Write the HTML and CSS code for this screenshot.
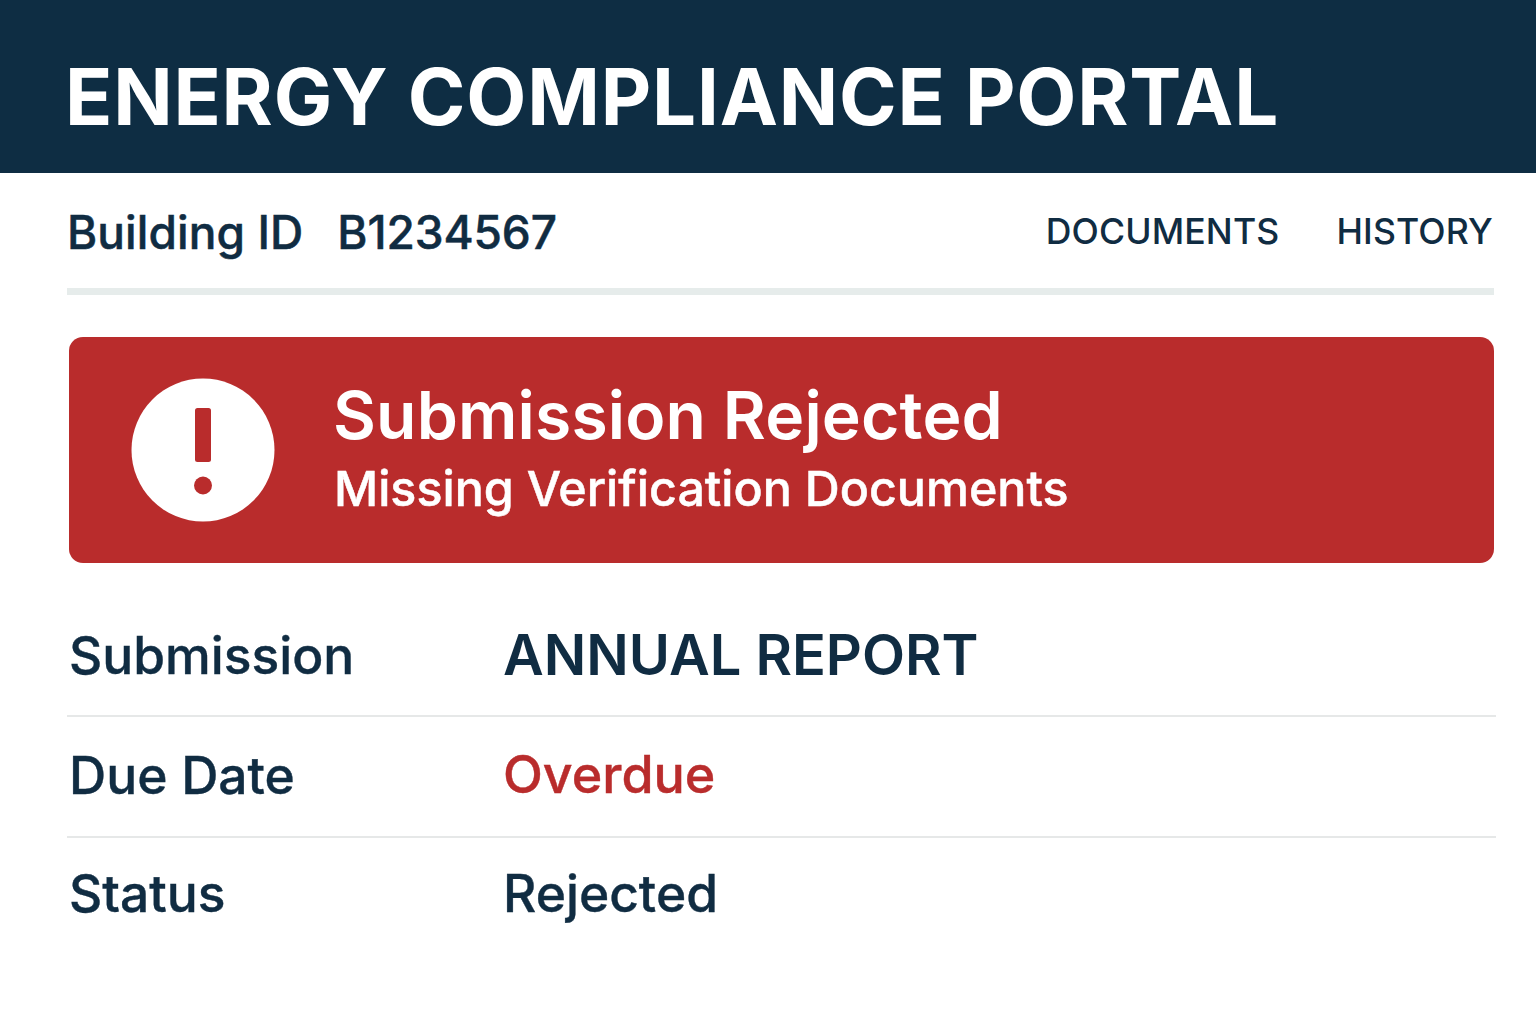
FILE: index.html
```html
<!DOCTYPE html>
<html lang="en">
<head>
<meta charset="utf-8">
<title>Energy Compliance Portal</title>
<link rel="stylesheet" href="styles.css">
</head>
<body>
<header class="top"><h1>ENERGY COMPLIANCE PORTAL</h1></header>
<main class="wrap">
<div class="bar">
<div class="id"><span class="id-label">Building ID</span><span>B1234567</span></div>
<nav class="nav"><a>DOCUMENTS</a><a>HISTORY</a></nav>
</div>
<section class="alert">
<svg class="icon" viewBox="0 0 144 144" width="144" height="144"><circle cx="72" cy="72" r="71.5" fill="#fff"/><rect x="64" y="30" width="16" height="54" rx="2.5" fill="#b92c2c"/><circle cx="72" cy="107.500" r="9" fill="#b92c2c"/></svg>
<div class="msg"><div class="t1">Submission Rejected</div><div class="t2">Missing Verification Documents</div></div>
</section>
<div class="rows">
<div class="row"><span class="k">Submission</span><span class="v big">ANNUAL REPORT</span></div>
<div class="row mid"><span class="k">Due Date</span><span class="v red">Overdue</span></div>
<div class="row last"><span class="k">Status</span><span class="v">Rejected</span></div>
</div>
</main>
</body>
</html>
```
FILE: styles.css
```css
*{box-sizing:border-box}
html,body{margin:0;padding:0;background:#fff}
body{font-family:Inter,"Liberation Sans",sans-serif;color:#102c42;height:1024px;overflow:hidden}
.top{height:173px;background:#0e2d43;display:flex;align-items:center;padding:20px 0 0 65px}
.top h1{margin:0;color:#fff;font-size:78px;font-weight:700;line-height:1;letter-spacing:.8px}
.wrap{padding:0 40px 0 67px}
.bar{height:122px;margin-right:2px;border-bottom:7px solid #e6eceb;display:flex;justify-content:space-between;align-items:center;padding-top:3px}
.id{display:flex;gap:34px;font-size:46px;font-weight:500;letter-spacing:-.1px;-webkit-text-stroke:.5px currentColor}
.id-label{letter-spacing:.1px}
.nav{display:flex;gap:57px;font-size:35.600px;font-weight:500;letter-spacing:.15px;padding-right:1px;padding-bottom:2px}
.alert{margin:42px 2px 0;height:226px;background:#b92c2c;border-radius:14px;display:flex;align-items:center;padding-left:62px;color:#fff}
.icon{flex:none}
.msg{margin-left:58px;padding-bottom:3px}
.t1{font-size:66px;font-weight:600;line-height:76px;letter-spacing:.15px}
.t2{font-size:48.400px;font-weight:500;line-height:62px;padding-left:1px;margin-top:5px;-webkit-text-stroke:.5px currentColor}
.rows{margin-top:32px;width:1429px}
.row{height:121px;display:flex;align-items:center;border-bottom:2px solid #e6e8e8;padding-left:2px;font-size:51.500px;font-weight:500;-webkit-text-stroke:.4px currentColor}
.row:first-child{height:122px}
.row.mid{padding-bottom:4px}
.row.last{border-bottom:0;padding-bottom:12px}
.k{width:434px}
.big{font-size:56px;font-weight:600;-webkit-text-stroke:0}
.red{color:#b92c2c;font-size:52px}
```
